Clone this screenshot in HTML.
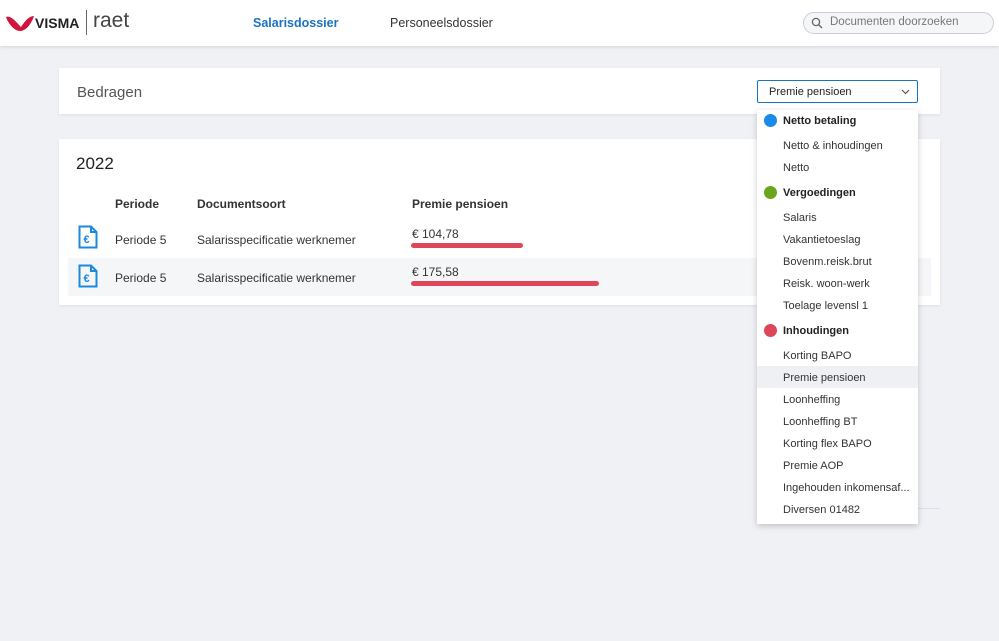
<!DOCTYPE html>
<html><head><meta charset="utf-8"><style>
*{box-sizing:border-box;margin:0;padding:0}
body{width:999px;height:641px;background:#f0f1f5;font-family:"Liberation Sans",sans-serif;color:#333;position:relative;overflow:hidden;font-size:12px}
.hdr{position:absolute;left:0;top:0;width:999px;height:46px;background:#fff;box-shadow:0 1px 3px rgba(0,0,0,.12)}
.abs{position:absolute}
.card{position:absolute;background:#fff;box-shadow:0 1px 3px rgba(0,0,0,.08)}
.dd{position:absolute;left:757px;top:110px;width:161px;height:414px;background:#fff;box-shadow:0 2px 6px rgba(0,0,0,.2)}
.it{position:absolute;left:26px;font-size:11px;color:#333;margin-top:1px}
.gh{position:absolute;left:26px;font-size:11px;font-weight:bold;color:#222;margin-top:1px}
.dot{position:absolute;left:7px;width:13px;height:13px;border-radius:50%}
</style></head><body>
<div class="hdr">
<svg class="abs" style="left:5px;top:13px" width="30" height="20" viewBox="0 0 30 20"><path d="M1 4 C6 2 12 10 16 14 C20 8 24 3 29 3 C27 9 22 18 15 18 C9 18 3 10 1 4Z" fill="#d2143c"/></svg>
<div class="abs" style="left:35px;top:15px;font-weight:bold;font-size:14px;color:#222">VISMA</div>
<div class="abs" style="left:86px;top:10px;width:1px;height:25px;background:#666"></div>
<div class="abs" style="left:93px;top:9px;font-size:21px;color:#444">raet</div>
<div class="abs" style="left:253px;top:16px;font-size:12.5px;font-weight:bold;color:#1a73c1">Salarisdossier</div>
<div class="abs" style="left:390px;top:16px;font-size:12.5px;color:#333">Personeelsdossier</div>
<div class="abs" style="left:803px;top:12px;width:191px;height:22px;border:1px solid #ccd;border-radius:11px;background:#f5f6f8"></div>
<svg class="abs" style="left:811px;top:17px" width="12" height="12" viewBox="0 0 12 12"><circle cx="5" cy="5" r="3.6" fill="none" stroke="#666" stroke-width="1.3"/><path d="M7.7 7.7L11 11" stroke="#666" stroke-width="1.4"/></svg>
<div class="abs" style="left:830px;top:16px;font-size:11.5px;color:#777">Documenten doorzoeken</div>
</div>
<div class="card" style="left:59px;top:68px;width:881px;height:46px">
<div class="abs" style="left:18px;top:16px;font-size:15px;color:#555">Bedragen</div>
</div>
<div class="abs" style="left:757px;top:80px;width:161px;height:23px;border:1px solid #1a73c1;border-radius:2px;background:#fff;z-index:2">
<div class="abs" style="left:11px;top:5px;font-size:11px;color:#222">Premie pensioen</div>
<svg class="abs" style="left:143px;top:8px" width="9" height="6" viewBox="0 0 9 6"><path d="M1 1L4.5 4.5L8 1" fill="none" stroke="#555" stroke-width="1.2"/></svg>
</div>
<div class="card" style="left:59px;top:139px;width:881px;height:166px">
<div class="abs" style="left:17px;top:15px;font-size:17px;color:#222">2022</div>
<div class="abs" style="left:56px;top:58px;font-size:12px;font-weight:bold">Periode</div>
<div class="abs" style="left:138px;top:58px;font-size:12px;font-weight:bold">Documentsoort</div>
<div class="abs" style="left:353px;top:58px;font-size:12px;font-weight:bold">Premie pensioen</div>
<div class="abs" style="left:9px;top:119px;width:863px;height:38px;background:#f5f6f8"></div>
<svg class="abs" style="left:19px;top:86px" width="20" height="24" viewBox="0 0 20 24"><path d="M1.5 1.5H13L18.5 7V22.5H1.5Z" fill="none" stroke="#1a8ae0" stroke-width="2"/><path d="M13 1.5V7H18.5" fill="none" stroke="#1a8ae0" stroke-width="2"/><text x="5.5" y="18" font-size="11" font-weight="bold" fill="#1a8ae0" font-family="Liberation Sans">€</text></svg>
<svg class="abs" style="left:19px;top:125px" width="20" height="24" viewBox="0 0 20 24"><path d="M1.5 1.5H13L18.5 7V22.5H1.5Z" fill="none" stroke="#1a8ae0" stroke-width="2"/><path d="M13 1.5V7H18.5" fill="none" stroke="#1a8ae0" stroke-width="2"/><text x="5.5" y="18" font-size="11" font-weight="bold" fill="#1a8ae0" font-family="Liberation Sans">€</text></svg>
<div class="abs" style="left:56px;top:94px;font-size:12px">Periode 5</div>
<div class="abs" style="left:138px;top:94px;font-size:12px">Salarisspecificatie werknemer</div>
<div class="abs" style="left:353px;top:88px;font-size:12px">€ 104,78</div>
<div class="abs" style="left:352px;top:104px;width:112px;height:5px;border-radius:3px;background:#e0465a"></div>
<div class="abs" style="left:56px;top:132px;font-size:12px">Periode 5</div>
<div class="abs" style="left:138px;top:132px;font-size:12px">Salarisspecificatie werknemer</div>
<div class="abs" style="left:353px;top:126px;font-size:12px">€ 175,58</div>
<div class="abs" style="left:352px;top:142px;width:188px;height:5px;border-radius:3px;background:#e0465a"></div>
</div>
<div class="abs" style="left:918px;top:508px;width:22px;height:1px;background:#dde"></div>
<div class="dd">
<div class="dot" style="top:4px;background:#1a8ae8"></div><div class="gh" style="top:4px">Netto betaling</div>
<div class="it" style="top:29px">Netto &amp; inhoudingen</div>
<div class="it" style="top:51px">Netto</div>
<div class="dot" style="top:76px;background:#6aa51b"></div><div class="gh" style="top:76px">Vergoedingen</div>
<div class="it" style="top:101px">Salaris</div>
<div class="it" style="top:123px">Vakantietoeslag</div>
<div class="it" style="top:145px">Bovenm.reisk.brut</div>
<div class="it" style="top:167px">Reisk. woon-werk</div>
<div class="it" style="top:189px">Toelage levensl 1</div>
<div class="dot" style="top:214px;background:#e0465a"></div><div class="gh" style="top:214px">Inhoudingen</div>
<div class="it" style="top:239px">Korting BAPO</div>
<div class="abs" style="left:0;top:256px;width:161px;height:22px;background:#eef0f3"></div>
<div class="it" style="top:261px">Premie pensioen</div>
<div class="it" style="top:283px">Loonheffing</div>
<div class="it" style="top:305px">Loonheffing BT</div>
<div class="it" style="top:327px">Korting flex BAPO</div>
<div class="it" style="top:349px">Premie AOP</div>
<div class="it" style="top:371px">Ingehouden inkomensaf...</div>
<div class="it" style="top:393px">Diversen 01482</div>
</div>
</body></html>
